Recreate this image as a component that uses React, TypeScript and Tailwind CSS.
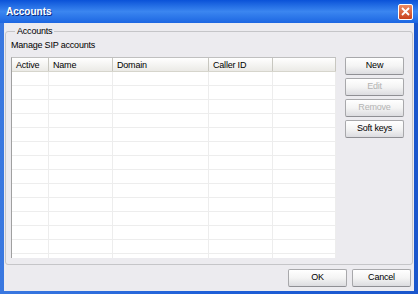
const cols = [
  { label: "Active", w: "w-[37px]" },
  { label: "Name", w: "w-[64px]" },
  { label: "Domain", w: "w-[96px]" },
  { label: "Caller ID", w: "w-[64px]" },
  { label: "", w: "flex-1" },
];

const rows = Array.from({ length: 14 });

function XpButton({ label, disabled }: { label: string; disabled?: boolean }) {
  return (
    <button
      className={`flex h-[18px] w-[59px] items-center justify-center rounded-[2px] border border-[#a8a8ab] border-b-[#8f8f94] bg-gradient-to-b from-[#ffffff] via-[#f4f4f4] to-[#dcdce0] text-[9px] tracking-[-0.2px] ${
        disabled ? "text-[#b3b3b3]" : "text-black"
      }`}
    >
      {label}
    </button>
  );
}

export default function App() {
  return (
    <div
      className="flex h-[294px] w-[418px] flex-col overflow-hidden bg-gradient-to-r from-[#3a78e0] via-[#1e5fd8] to-[#1a56cc]"
      style={{ fontFamily: '"Liberation Sans", Arial, sans-serif' }}
    >
      {/* Title bar */}
      <div className="flex h-[23px] items-center justify-between bg-gradient-to-b from-[#0a52d8] via-[#3b86f0] to-[#1c66e2] pl-[6px] pr-[5px]">
        <span className="text-[10px] font-bold text-white [text-shadow:1px_1px_0_#0a2a80]">
          Accounts
        </span>
        <div className="flex h-[16px] w-[15px] items-center justify-center rounded-[2px] border border-white bg-gradient-to-b from-[#ec8a62] to-[#c8401a]">
          <svg width="9" height="9" viewBox="0 0 9 9">
            <path d="M1 1 L8 8 M8 1 L1 8" stroke="white" strokeWidth="1.8" />
          </svg>
        </div>
      </div>

      {/* Body */}
      <div className="mx-[4px] mb-[3px] flex flex-1 flex-col bg-[#ecebef] text-[9px] tracking-[-0.2px] text-black">
        <fieldset className="mx-[1px] mt-[2px] rounded-[3px] border border-[#c5c5c8] px-[5px] pb-[6px]">
          <legend className="ml-[4px] px-[2px] leading-[12px]">Accounts</legend>
          <div className="mt-[2px] leading-[13px]">Manage SIP accounts</div>
          <div className="mt-[5px] flex gap-[9px]">
            {/* List */}
            <div className="h-[201px] w-[325px] overflow-hidden border-l border-t border-[#a0a0a0] border-t-[#c0c0c0] bg-white">
              <div className="flex h-[14px] border-b border-[#d6d5cc] bg-gradient-to-b from-[#ffffff] to-[#ebeae6]">
                {cols.map((c, i) => (
                  <div
                    key={i}
                    className={`${c.w} flex items-center border-r border-[#c8c7c0] pl-[4px] leading-[12px]`}
                  >
                    {c.label}
                  </div>
                ))}
              </div>
              {rows.map((_, r) => (
                <div key={r} className="flex h-[14px] border-b border-[#ededed]">
                  {cols.map((c, i) => (
                    <div key={i} className={`${c.w} border-r border-[#ededed]`} />
                  ))}
                </div>
              ))}
            </div>
            {/* Buttons */}
            <div className="flex flex-col gap-[3px]">
              <XpButton label="New" />
              <XpButton label="Edit" disabled />
              <XpButton label="Remove" disabled />
              <XpButton label="Soft keys" />
            </div>
          </div>
        </fieldset>

        <div className="mt-auto mb-[4px] mr-[3px] flex justify-end gap-[5px]">
          <XpButton label="OK" />
          <XpButton label="Cancel" />
        </div>
      </div>
    </div>
  );
}
